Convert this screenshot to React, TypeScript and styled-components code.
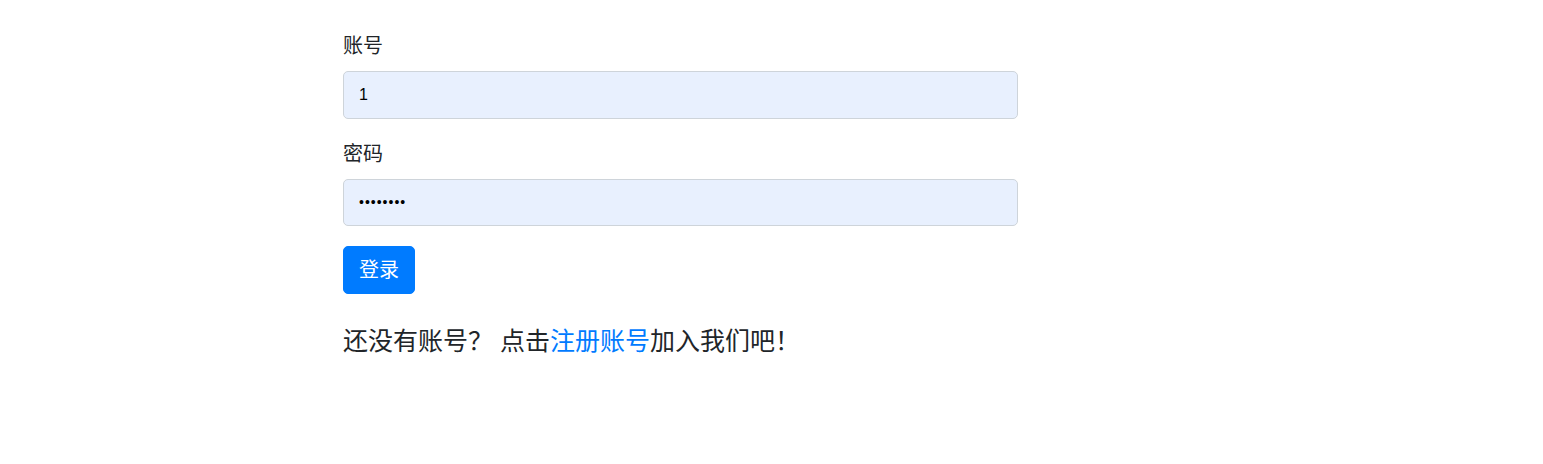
import React from "react";
import styled, { createGlobalStyle } from "styled-components";

const Global = createGlobalStyle`
  html, body { margin: 0; padding: 0; background: #fff; }
  body {
    font-family: "Liberation Sans", "Noto Sans CJK SC", sans-serif;
    color: #212529;
    font-size: 20px;
    line-height: 1.5;
  }
`;

const Page = styled.div`
  padding: 31px 0 0 343px;
`;

const Form = styled.form`
  width: 675px;
  display: flex;
  flex-direction: column;
`;

const Group = styled.div`
  display: flex;
  flex-direction: column;
  margin-bottom: 20px;
`;

const Label = styled.label`
  font-size: 20px;
  line-height: 30px;
  margin-bottom: 10px;
  color: #212529;
`;

const Input = styled.input`
  box-sizing: border-box;
  height: 47.5px;
  width: 100%;
  padding: 7.5px 15px;
  font-family: "Liberation Sans", "Noto Sans CJK SC", sans-serif;
  font-size: 16px;
  color: #000;
  background: rgb(232, 240, 254);
  border: 1px solid #ced4da;
  border-radius: 5px;
  outline: none;
`;

const PasswordInput = styled(Input)`
  font-size: 14px;
  letter-spacing: 1px;
`;

const Button = styled.button`
  align-self: flex-start;
  box-sizing: border-box;
  height: 47.5px;
  padding: 0 15px;
  font-family: "Liberation Sans", "Noto Sans CJK SC", sans-serif;
  font-size: 20px;
  line-height: 30px;
  color: #fff;
  background: #007bff;
  border: 1px solid #007bff;
  border-radius: 5px;
  cursor: pointer;
`;

const Hint = styled.h5`
  margin: 32px 0 0;
  font-size: 25px;
  font-weight: 400;
  line-height: 30px;
  color: #212529;
`;

const Link = styled.a`
  color: #007bff;
  text-decoration: none;
`;

export default function App() {
  return (
    <>
      <Global />
      <Page>
        <Form onSubmit={(e) => e.preventDefault()}>
          <Group>
            <Label>账号</Label>
            <Input type="text" defaultValue="1" />
          </Group>
          <Group>
            <Label>密码</Label>
            <PasswordInput type="password" defaultValue="12345678" />
          </Group>
          <Button type="submit">登录</Button>
        </Form>
        <Hint>
          还没有账号？ 点击<Link href="#">注册账号</Link>加入我们吧！
        </Hint>
      </Page>
    </>
  );
}
